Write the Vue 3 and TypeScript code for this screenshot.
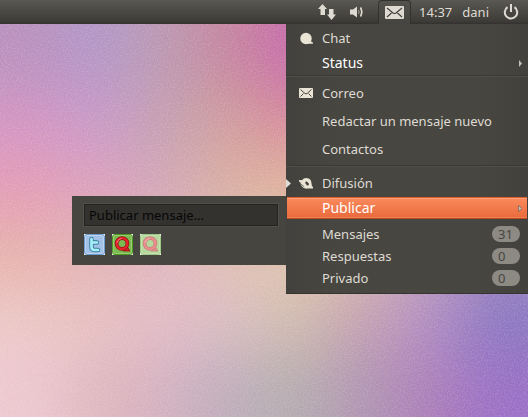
<script setup lang="ts">
import { ref } from 'vue'

interface Tile {
  x: number
  y: number
  color: string
}

interface Counter {
  label: string
  count: number
}

const palette: string[][] = [
  ['#b890bc', '#b296c8', '#bb98b0', '#c6849c', '#c668ac', '#c668ac', '#b080b8', '#a080c0'],
  ['#d494c4', '#c898c8', '#c5a0b0', '#d09e9c', '#d8889a', '#dc8c9c', '#c890b0', '#b088c0'],
  ['#e39cb4', '#dda0bc', '#d2a6b6', '#dab0a0', '#e0b69c', '#deb0a0', '#d0a0b0', '#b890c0'],
  ['#e6b2ac', '#e2b2b4', '#e0b6bc', '#e0c0b4', '#e0c6b0', '#d8b8b0', '#bc9cbc', '#9c84c0'],
  ['#ecc8c6', '#e8c0c0', '#e2bcc8', '#dabdc2', '#d0bcac', '#c49fb0', '#b28cc4', '#8876c0'],
  ['#ecc8d0', '#dfb6be', '#d3b0c0', '#bcacba', '#b4acae', '#b094b2', '#ac7eb8', '#9a6ec6'],
]

const tileWidth = 66
const tileHeight = 66

const tiles: Tile[] = []
for (let row = -1; row <= palette.length; row++) {
  const colors = palette[Math.min(Math.max(row, 0), palette.length - 1)]
  for (let col = -1; col <= colors.length; col++) {
    tiles.push({
      x: col * tileWidth,
      y: 24 + row * tileHeight,
      color: colors[Math.min(Math.max(col, 0), colors.length - 1)],
    })
  }
}

const counters: Counter[] = [
  { label: 'Mensajes', count: 31 },
  { label: 'Respuestas', count: 0 },
  { label: 'Privado', count: 0 },
]

const message = ref('')
</script>

<template>
  <div class="desktop">
    <svg class="wallpaper" viewBox="0 0 528 417" preserveAspectRatio="none" aria-hidden="true">
      <defs>
        <filter id="soften" filterUnits="userSpaceOnUse" x="-66" y="-66" width="660" height="560" color-interpolation-filters="sRGB">
          <feGaussianBlur stdDeviation="30" />
        </filter>
        <filter id="grain" x="0" y="0" width="100%" height="100%" color-interpolation-filters="sRGB">
          <feTurbulence type="fractalNoise" baseFrequency="0.7" numOctaves="2" />
          <feColorMatrix values="0 0 0 0 1  0 0 0 0 1  0 0 0 0 1  0.36 0 0 0 -0.14" />
        </filter>
      </defs>
      <g filter="url(#soften)">
        <rect v-for="(t, i) in tiles" :key="i" :x="t.x" :y="t.y" :width="tileWidth + 1" :height="tileHeight + 1" :fill="t.color" />
      </g>
      <rect width="528" height="417" filter="url(#grain)" />
    </svg>

    <header class="panel">
      <button class="indicator" aria-label="Red">
        <svg width="18" height="18" viewBox="0 0 18 18" fill="currentColor">
          <path d="M4.500 1L9 6H7v6H2.500V6H0zM11 6h4.500v5.500H18L13.500 17 9 11.500h2z" />
        </svg>
      </button>
      <button class="indicator" aria-label="Volumen">
        <svg width="14" height="14" viewBox="0 0 14 14">
          <path d="M0 4.500h3L7 1.500v11l-4-3H0z" fill="currentColor" />
          <path d="M8.500 5q1.200 2 0 4" fill="none" stroke="#a9a498" />
          <path d="M10.500 2.500q2.500 4.500 0 9" fill="none" stroke="currentColor" stroke-width="1.700" />
        </svg>
      </button>
      <button class="indicator open" aria-label="Mensajes" aria-expanded="true">
        <svg width="19" height="13" viewBox="0 0 19 13">
          <rect width="19" height="13" rx="1" fill="currentColor" />
          <path d="M2 2l6 5q1.500 1 3 0l6-5M2 11l4.500-4M17 11l-4.500-4" fill="none" stroke="#45443f" stroke-width="1.200" />
        </svg>
      </button>
      <button class="indicator clock">14:37</button>
      <button class="indicator">dani</button>
      <button class="indicator" aria-label="Apagar">
        <svg width="16" height="16" viewBox="0 0 16 16" fill="none" stroke="currentColor" stroke-width="2">
          <path d="M4.500 3.200a6.200 6.200 0 1 0 7 0M8 0v8" />
        </svg>
      </button>
    </header>

    <main class="workspace">
      <nav class="menu" aria-label="Mensajes">
        <button class="item heading">
          <svg class="icon" width="14" height="14" viewBox="0 0 14 14" fill="currentColor">
            <circle cx="7" cy="7.500" r="5.700" />
            <path d="M11.500 8.500q.3 2.500 2.500 3v1.200H8z" />
          </svg>
          <span class="label">Chat</span>
        </button>
        <button class="item bright">
          <span class="label">Status</span>
          <svg class="arrow" width="5" height="7" viewBox="0 0 5 7"><path d="M1 0l3 3.500L1 7z" fill="#c4c0b6" /></svg>
        </button>

        <hr class="divider" />

        <button class="item heading">
          <svg class="icon" width="14" height="10" viewBox="0 0 14 10">
            <rect width="14" height="10" rx="1" fill="currentColor" />
            <path d="M1.500 1.500l4.500 4q1 .8 2 0l4.500-4M1.500 8.500l3-3M12.500 8.500l-3-3" fill="none" stroke="#45443f" />
          </svg>
          <span class="label">Correo</span>
        </button>
        <button class="item heading"><span class="label">Redactar un mensaje nuevo</span></button>
        <button class="item heading"><span class="label">Contactos</span></button>

        <hr class="divider" />

        <button class="item heading">
          <svg class="marker" width="5" height="9" viewBox="0 0 5 9"><path d="M0 0l5 4.500L0 9z" fill="#dfdcd6" /></svg>
          <svg class="icon" width="14" height="14" viewBox="0 0 14 14">
            <path d="M0 4l3 .2Q4.500 2 7.300 2q5.200.3 5.200 5.600 0 2.300 1.500 3.500v1.500H8.500Q4.500 13 2.800 10.200L1.500 7.800 2 7 0 5.500z" fill="currentColor" />
            <path d="M2.200 7.800q1 2 3 2.800" fill="none" stroke="#454440" stroke-width=".7" />
            <path d="M6.300 5.800l1.700-.3 2 2.200-.4 1.500-1.600.3-1.600-2z" fill="#454440" />
          </svg>
          <span class="label">Difusión</span>
        </button>

        <div class="branch">
          <button class="item bright selected" aria-expanded="true">
            <span class="label">Publicar</span>
            <svg class="arrow" width="5" height="7" viewBox="0 0 5 7"><path d="M.5.500l3.500 3-3.500 3z" fill="#d0c3b6" stroke="#79695f" stroke-width=".8" /></svg>
          </button>

          <section class="submenu" aria-label="Publicar">
            <input v-model="message" class="message" type="text" placeholder="Publicar mensaje..." aria-label="Publicar mensaje" />
            <div class="accounts">
              <button class="account" aria-label="Twitter">
                <svg width="21" height="21" viewBox="0 0 21 21">
                  <rect width="21" height="21" fill="#e9f1fa" />
                  <rect x=".5" y=".5" width="20" height="20" rx="2.500" fill="#a3c1e6" stroke="#6c9bd0" />
                  <rect x="1.500" y="1.500" width="18" height="18" rx="2" fill="none" stroke="#bcd3ee" />
                  <path d="M7.500 5v8q0 3 3 3H14M7.500 8.500H13" fill="none" stroke="#347f9f" stroke-width="4.400" stroke-linecap="round" stroke-linejoin="round" />
                  <path d="M7.500 5v8q0 3 3 3H14M7.500 8.500H13" fill="none" stroke="#a9f0fb" stroke-width="2.600" stroke-linecap="round" stroke-linejoin="round" />
                </svg>
              </button>
              <button v-for="faded in [false, true]" :key="String(faded)" class="account" :aria-label="faded ? 'Identi.ca (inactiva)' : 'Identi.ca'">
                <svg width="21" height="21" viewBox="0 0 21 21">
                  <rect width="21" height="21" fill="#f1f7ec" />
                  <g :class="{ faded }">
                    <rect x=".5" y=".5" width="20" height="20" rx="2.500" fill="#7dbb52" stroke="#489c20" />
                    <rect x="1.500" y="1.500" width="18" height="18" rx="2" fill="none" stroke="#98cc72" />
                    <path d="M14.500 11.500l3.500 5.500h-7z" fill="#e0222b" stroke="#8c1712" stroke-width=".8" />
                    <circle cx="10" cy="9.500" r="5.400" fill="none" stroke="#8c1712" stroke-width="3.800" />
                    <circle cx="10" cy="9.500" r="5.400" fill="none" stroke="#e8222c" stroke-width="2.300" />
                    <path d="M5 8.500q.8-3.500 4.500-4.200" fill="none" stroke="#ff8f8e" stroke-width=".8" stroke-linecap="round" />
                  </g>
                </svg>
              </button>
            </div>
          </section>
        </div>

        <button v-for="c in counters" :key="c.label" class="item">
          <span class="label">{{ c.label }}</span>
          <span class="badge">{{ c.count }}</span>
        </button>
      </nav>
    </main>
  </div>
</template>

<style>
body {
  margin: 0;
}
</style>

<style scoped>
.desktop {
  position: relative;
  min-height: 100vh;
  overflow: hidden;
  font: 13px/18px "Noto Sans", "Open Sans", sans-serif;
  color: #dfdbd2;
}

.wallpaper {
  position: absolute;
  inset: 0;
  width: 100%;
  height: 100%;
}

button {
  margin: 0;
  padding: 0;
  border: 0;
  background: none;
  color: inherit;
  font: inherit;
  text-align: left;
  cursor: default;
}

svg {
  display: block;
}

.panel {
  position: relative;
  display: flex;
  justify-content: flex-end;
  height: 24px;
  box-sizing: border-box;
  padding-right: 9px;
  gap: 14px;
  background: linear-gradient(#595852, #3c3b37 90%, #32312e);
}

.indicator {
  display: flex;
  align-items: center;
  justify-content: center;
}

.indicator.open {
  width: 33px;
  margin-right: -6px;
  box-sizing: border-box;
  border: 1px solid #33322f;
  border-bottom: 0;
  border-radius: 4px 4px 0 0;
  background: linear-gradient(#53524d, #454440);
}

.clock {
  margin-right: -4px;
}

.workspace {
  position: relative;
  display: flex;
  justify-content: flex-end;
}

.menu {
  display: flex;
  flex-direction: column;
  width: 242px;
  box-sizing: border-box;
  padding-bottom: 4px;
  border-bottom: 1px solid #353431;
  background: linear-gradient(90deg, #42413d, #474641 20%, #474641 80%, #42413d);
}

.item {
  display: grid;
  grid-template-columns: 13px 23px 1fr auto;
  align-items: center;
  height: 22px;
  padding-right: 8px;
}

.heading {
  height: 28px;
}

.bright {
  padding-right: 5px;
  color: #ffffff;
  font-size: 14px;
}

.marker {
  grid-column: 1;
  grid-row: 1;
}

.icon {
  grid-column: 2;
  grid-row: 1;
  color: #e9e4d4;
}

.label {
  grid-column: 3;
  grid-row: 1;
}

.arrow,
.badge {
  grid-column: 4;
  grid-row: 1;
}

.divider {
  width: 100%;
  height: 2px;
  margin: 1px 0 2px;
  border: 0;
  background: linear-gradient(#3a3936 50%, #504f4a 50%);
}

.divider ~ .divider {
  margin: 2px 0;
}

.branch {
  position: relative;
  margin-bottom: 4px;
  padding: 0 1px;
}

.selected {
  width: 100%;
  padding-right: 4px;
  grid-template-columns: 12px 23px 1fr auto;
  background: linear-gradient(#fb8c5e, #e8683a);
  box-shadow: inset 0 1px #d9602f, inset 0 2px #ff9c72, inset 0 -1px #b44a22, inset 0 -2px #f5814f;
}

.badge {
  width: 28px;
  height: 16px;
  box-sizing: border-box;
  padding-left: 6px;
  border-radius: 8px;
  background: #8c8a83;
  color: #474641;
  line-height: 16px;
}

.submenu {
  position: absolute;
  top: -1px;
  right: 100%;
  width: 214px;
  box-sizing: border-box;
  padding: 8px 8px 10px 12px;
  background: #464540;
}

.message {
  display: block;
  width: 100%;
  height: 22px;
  box-sizing: border-box;
  padding: 0 4px;
  border: 1px solid #242321;
  background: #33322f;
  box-shadow: 0 0 0 1px #504f4a;
  color: #e9e4d4;
  font: inherit;
  outline: none;
}

.message::placeholder {
  color: #070707;
  opacity: 1;
}

.accounts {
  display: flex;
  gap: 7px;
  margin-top: 8px;
}

.faded {
  opacity: 0.5;
}
</style>
